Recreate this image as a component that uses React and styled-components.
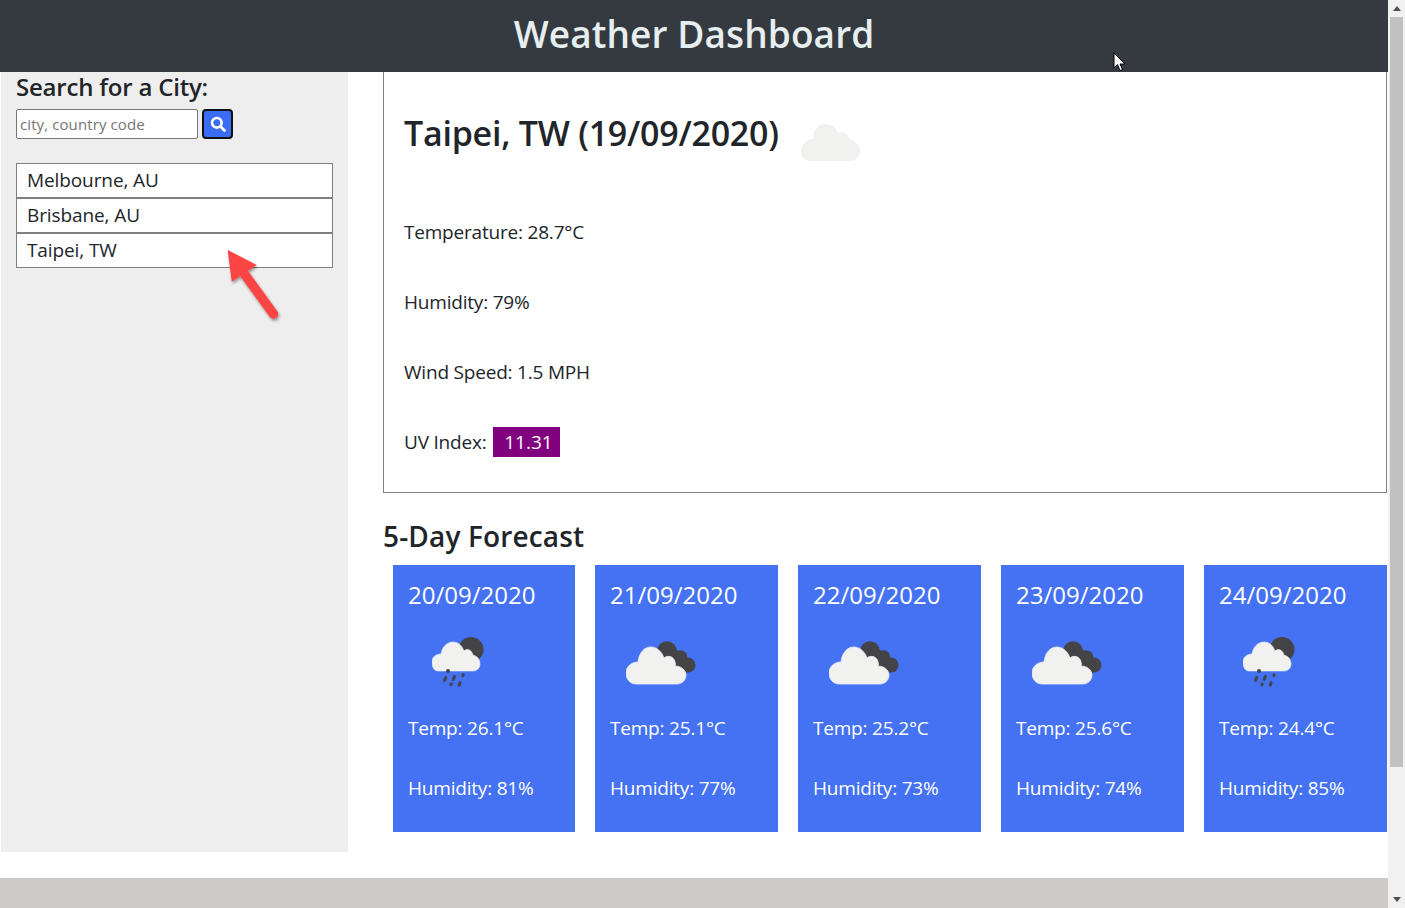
import React from "react";
import styled, { createGlobalStyle } from "styled-components";

const Global = createGlobalStyle`
  html, body { margin: 0; padding: 0; height: 100%; overflow: hidden; background: #fff; }
  body { font-family: "Open Sans", "Noto Sans", sans-serif; color: #212529; }
`;
const Frame = styled.div`display: flex; width: 1405px; height: 908px; overflow: hidden; position: relative;`;
const Page = styled.div`width: 1388px; height: 908px; display: flex; flex-direction: column; flex: none;`;
const Header = styled.header`
  height: 72px; flex: none; background: #343a40; display: flex; align-items: center; justify-content: center; position: relative; z-index: 1;
`;
const Title = styled.h1`margin: 0 0 6px; font-size: 37px; font-weight: 600; letter-spacing: 0.1px; color: #e6eef0; line-height: 1;`;
const Cursor = styled.svg`position: absolute; left: 1113px; top: 52px;`;
const Body = styled.div`display: flex; align-items: flex-start; height: 780px; flex: none;`;
const Sidebar = styled.aside`
  width: 347px; height: 780px; margin-left: 1px; background: #eeeeee; padding: 0 15px; box-sizing: border-box; position: relative; flex: none;
`;
const SearchLabel = styled.h3`margin: -1px 0 0; font-size: 24px; font-weight: 600; line-height: 32px; letter-spacing: -0.2px;`;
const SearchRow = styled.form`display: flex; align-items: center; gap: 4px; margin-top: 6px;`;
const SearchInput = styled.input`
  width: 182px; height: 30px; box-sizing: border-box; border: 1px solid #767676; border-radius: 2px; padding: 0 3px; font: 15px "Open Sans", sans-serif; letter-spacing: 0.1px; background: #fff; outline: none;
  &::placeholder { color: #757575; opacity: 1; }
`;
const SearchButton = styled.button`
  width: 31px; height: 30px; box-sizing: border-box; background: #3a6cf4; border: 2px solid #111; border-radius: 4px; padding: 0; display: flex; align-items: center; justify-content: center;
`;
const CityList = styled.ul`list-style: none; margin: 24px 0 0; padding: 0; width: 317px;`;
const City = styled.li`
  height: 35px; box-sizing: border-box; border: 1px solid #808080; background: #fff; padding: 0 10px; font-size: 19px; line-height: 33px; letter-spacing: -0.1px;
`;
const Arrow = styled.svg`position: absolute; left: 220px; top: 170px; overflow: visible;`;
const Main = styled.main`width: 1004px; margin-left: 35px; flex: none;`;
const Current = styled.section`
  height: 421px; box-sizing: border-box; border: 1px solid #808080; border-top: none; padding: 0 20px;
`;
const CityHeading = styled.h2`
  margin: 0; padding-top: 37px; height: 125px; box-sizing: border-box; display: flex; align-items: flex-start; gap: 22px; font-size: 34px; font-weight: 600; line-height: 48px; letter-spacing: -0.25px;
`;
const BigCloud = styled.svg`margin-top: 15px;`;
const Stat = styled.p`margin: 0; height: 70px; display: flex; align-items: center; font-size: 19px; letter-spacing: -0.2px; white-space: pre;`;
const UvBadge = styled.span`background: #800080; color: #fff; height: 30px; line-height: 30px; padding: 0 7px 0 11px; margin-left: 2px; letter-spacing: 0;`;
const ForecastHeading = styled.h3`margin: 23px 0 9px; font-size: 28px; font-weight: 600; line-height: 40px; letter-spacing: 0.15px;`;
const Cards = styled.div`display: grid; grid-template-columns: 182px repeat(4, 183px); column-gap: 20px; margin-left: 10px;`;
const Card = styled.article`height: 267px; background: #4472f2; color: #fff; padding: 15px 15px 0; box-sizing: border-box;`;
const CardDate = styled.div`font-size: 24px; line-height: 30px; letter-spacing: 0;`;
const IconSlot = styled.div`height: 104px; display: flex;`;
const CardLine = styled.div`height: 60px; font-size: 19px; line-height: 28px; letter-spacing: -0.2px;`;
const Footer = styled.footer`margin-top: 26px; flex: 1; background: #cccac8;`;
const Scrollbar = styled.div`width: 17px; height: 908px; background: #f1f1f1; display: flex; flex-direction: column; align-items: center; flex: none;`;
const ScrollThumb = styled.div`width: 13px; height: 750px; background: #c1c1c1; margin-top: 6px; flex: none;`;
const ScrollArrow = styled.svg`display: block; flex: none; margin-top: ${p => p.$mt || 0}px;`;

const CloudsIcon = () => (
  <svg width="70" height="44" viewBox="0 0 70 44" style={{ marginLeft: 16, marginTop: 31 }}>
    <g fill="#444446">
      <circle cx="41" cy="10" r="9.8" />
      <circle cx="54.5" cy="16" r="6.8" />
      <circle cx="62" cy="24" r="7.5" />
      <path d="M32 12 L50 8 L62 18 L62 31.5 L42 31.5 Z" />
    </g>
    <path fill="#f1f1ef" stroke="#e8ecf8" strokeWidth="0.8" d="M10 43 C4 43 0 38 0 32 C0 26 5 21 12 21 C13 12 18 6 25 6 C31 6 36 11 38 17 C41 14 48 15 49 21 C50 23 49 25 49 25 C55 25 60 29 60 34 C60 39 56 43 51 43 Z" />
  </svg>
);
const RainIcon = () => (
  <svg width="56" height="52" viewBox="0 0 56 52" style={{ marginLeft: 24, marginTop: 26 }}>
    <circle cx="39" cy="13.5" r="12.5" fill="#444446" />
    <path fill="#f1f1ef" stroke="#e8ecf8" strokeWidth="0.6" d="M6 35 C2 35 0 31 0 26 C0 21 4 18 9 18 C10 11 15 6 21 6 C27 6 30 10 32 15 C35 12 40 14 41 19 C45 20 48 23 48 28 C48 32 45 35 41 35 Z" />
    <circle cx="16" cy="35" r="2" fill="#444446" />
    <g stroke="#444446" strokeWidth="3" strokeLinecap="round">
      <path d="M13.7 41.5 L12.6 44.5" />
      <path d="M22.4 40.5 L21.3 43.5" />
      <path d="M31.2 38.6 L30.9 39.6" />
      <path d="M19.2 47.8 L18.9 48.6" />
      <path d="M28 46.8 L27.2 49.2" />
    </g>
  </svg>
);

const days = [
  ["20/09/2020", "26.1", "81", RainIcon],
  ["21/09/2020", "25.1", "77", CloudsIcon],
  ["22/09/2020", "25.2", "73", CloudsIcon],
  ["23/09/2020", "25.6", "74", CloudsIcon],
  ["24/09/2020", "24.4", "85", RainIcon],
];

export default function App() {
  return (
    <Frame>
      <Global />
      <Page>
        <Header>
          <Title>Weather Dashboard</Title>
          <Cursor width="13" height="20" viewBox="0 0 13 20">
            <path d="M1 1 L1 16 L4.5 12.6 L7 18.5 L9.5 17.5 L7 12 L12 12 Z" fill="#fff" stroke="#000" strokeWidth="1" />
          </Cursor>
        </Header>
        <Body>
          <Sidebar>
            <SearchLabel>Search for a City:</SearchLabel>
            <SearchRow onSubmit={e => e.preventDefault()}>
              <SearchInput placeholder="city, country code" />
              <SearchButton type="button" aria-label="Search">
                <svg width="16" height="16" viewBox="0 0 16 16">
                  <circle cx="6.8" cy="6.8" r="4.8" fill="none" stroke="#fff" strokeWidth="2.6" />
                  <path d="M10.5 10.5 L14.5 14.5" stroke="#fff" strokeWidth="2.8" strokeLinecap="round" />
                </svg>
              </SearchButton>
            </SearchRow>
            <CityList>
              <City>Melbourne, AU</City>
              <City>Brisbane, AU</City>
              <City>Taipei, TW</City>
            </CityList>
            <Arrow width="62" height="76" viewBox="0 0 62 76">
              <defs>
                <filter id="s" x="-30%" y="-30%" width="160%" height="160%">
                  <feDropShadow dx="1" dy="2" stdDeviation="1.5" floodColor="#000" floodOpacity="0.4" />
                </filter>
              </defs>
              <g filter="url(#s)">
                <path d="M52.5 72 L22 30" stroke="#fb4444" strokeWidth="9.5" strokeLinecap="round" />
                <path d="M6.7 8 L35.7 23 L10.7 39.7 Z" fill="#fb4444" />
              </g>
            </Arrow>
          </Sidebar>
          <Main>
            <Current>
              <CityHeading>
                Taipei, TW (19/09/2020)
                <BigCloud width="60" height="38" viewBox="0 0 60 38">
                  <path fill="#f1f1ef" d="M9 37 C3 37 0 33 0 27 C0 21 5 15 12 15 C12 7 17 0 24 0 C31 0 35 4 37 9 C40 7 47 8 48 15 C54 16 59 21 59 27 C59 33 55 37 49 37 Z" />
                </BigCloud>
              </CityHeading>
              <Stat>Temperature: 28.7°C</Stat>
              <Stat>Humidity: 79%</Stat>
              <Stat>Wind Speed: 1.5 MPH</Stat>
              <Stat>UV Index: <UvBadge>11.31</UvBadge></Stat>
            </Current>
            <ForecastHeading>5-Day Forecast</ForecastHeading>
            <Cards>
              {days.map(([d, t, h, Icon]) => (
                <Card key={d}>
                  <CardDate>{d}</CardDate>
                  <IconSlot><Icon /></IconSlot>
                  <CardLine>Temp: {t}°C</CardLine>
                  <CardLine>Humidity: {h}%</CardLine>
                </Card>
              ))}
            </Cards>
          </Main>
        </Body>
        <Footer />
      </Page>
      <Scrollbar>
        <ScrollArrow width="8" height="5" viewBox="0 0 8 5" $mt={6}><path d="M0 5 L4 0 L8 5Z" fill="#505050" /></ScrollArrow>
        <ScrollThumb />
        <ScrollArrow width="8" height="5" viewBox="0 0 8 5" $mt={130}><path d="M0 0 L4 5 L8 0Z" fill="#505050" /></ScrollArrow>
      </Scrollbar>
    </Frame>
  );
}
